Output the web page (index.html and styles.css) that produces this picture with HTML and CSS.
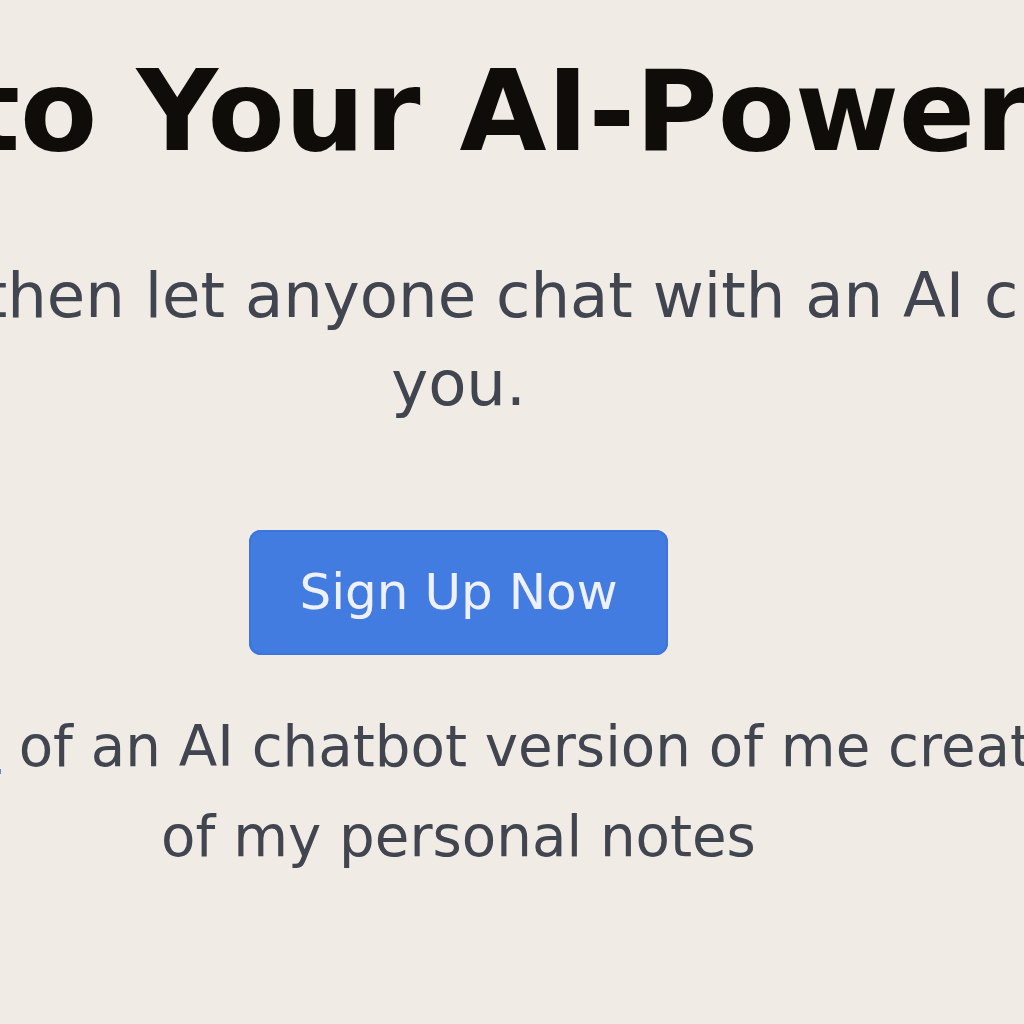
FILE: index.html
```html
<!DOCTYPE html>
<html lang="en">
<head>
<meta charset="utf-8">
<title>Welcome to Your AI-Powered Brain</title>
<link rel="stylesheet" href="styles.css">
</head>
<body>
<main class="hero">
  <h1 class="hero-title">Welcome to Your AI-Powered Brain</h1>
  <p class="hero-lead">Add info, then let anyone chat with an AI clone of<br>you.</p>
  <a class="hero-button" href="#signup">Sign Up Now</a>
  <p class="hero-note">Try the <a class="hero-link" href="#demo">working portal</a> of an AI chatbot version of me created from hundreds<br>of my personal notes</p>
</main>
</body>
</html>
```

FILE: styles.css
```css
html, body {
  margin: 0;
  padding: 0;
}

body {
  background: #f0ebe5;
  overflow: hidden;
  font-family: "DejaVu Sans", "Liberation Sans", sans-serif;
  height: 1024px;
}

.hero {
  width: 2400px;
  margin-left: -741.5px;
  padding-top: 49px;
  display: flex;
  flex-direction: column;
  align-items: center;
  text-align: center;
  white-space: nowrap;
}

.hero-title {
  margin: 0 0 78px;
  font-size: 112.5px;
  line-height: 125px;
  font-weight: 700;
  color: #0f0c0a;
}

.hero-lead {
  margin: 0 0 103px;
  font-size: 62.5px;
  line-height: 87.5px;
  color: #41454f;
}

.hero-button {
  display: block;
  box-sizing: border-box;
  padding: 25px 50px;
  font-size: 50px;
  line-height: 75px;
  background: #437ce0;
  color: #eef1fb;
  text-decoration: none;
  border-radius: 12px;
  box-shadow: inset 0 0 0 2px #3b76de;
}

.hero-note {
  margin: 47px 0 0;
  font-size: 56.25px;
  line-height: 90px;
  color: #41454f;
}

.hero-link {
  color: #2f6ae0;
  text-decoration: underline;
}
```
